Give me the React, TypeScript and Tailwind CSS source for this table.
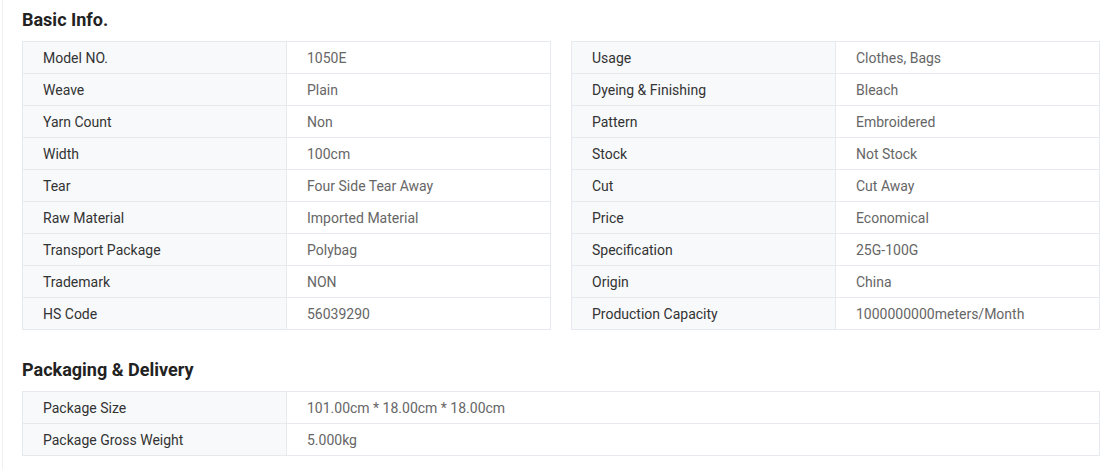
const basicLeft: [string, string][] = [
  ['Model NO.', '1050E'],
  ['Weave', 'Plain'],
  ['Yarn Count', 'Non'],
  ['Width', '100cm'],
  ['Tear', 'Four Side Tear Away'],
  ['Raw Material', 'Imported Material'],
  ['Transport Package', 'Polybag'],
  ['Trademark', 'NON'],
  ['HS Code', '56039290'],
];

const basicRight: [string, string][] = [
  ['Usage', 'Clothes, Bags'],
  ['Dyeing & Finishing', 'Bleach'],
  ['Pattern', 'Embroidered'],
  ['Stock', 'Not Stock'],
  ['Cut', 'Cut Away'],
  ['Price', 'Economical'],
  ['Specification', '25G-100G'],
  ['Origin', 'China'],
  ['Production Capacity', '1000000000meters/Month'],
];

const packaging: [string, string][] = [
  ['Package Size', '101.00cm * 18.00cm * 18.00cm'],
  ['Package Gross Weight', '5.000kg'],
];

function SpecTable({ rows }: { rows: [string, string][] }) {
  return (
    <div className="border-t border-l border-[#e6e9ed]">
      {rows.map(([k, v]) => (
        <div key={k} className="flex h-[32px] border-b border-[#e6e9ed]">
          <div className="w-[264px] shrink-0 flex items-center pl-[20px] pt-[2px] bg-[#f8f9fb] border-r border-[#e6e9ed] text-[#333] whitespace-nowrap">
            {k}
          </div>
          <div className="flex-1 flex items-center pl-[20px] pt-[2px] border-r border-[#e6e9ed] text-[#666] whitespace-nowrap">
            {v}
          </div>
        </div>
      ))}
    </div>
  );
}

export default function App() {
  return (
    <div className="bg-white w-[1106px] h-[469px] overflow-hidden" style={{ fontFamily: 'Roboto, "Liberation Sans", sans-serif' }}>
      <div className="ml-[2px] border-l border-[#f0f0f0] pl-[19px] h-full text-[14px]">
        <div className="w-[1078px]">
          <h2 className="h-[41px] pb-[3px] flex items-center text-[18px] font-bold text-[#222]">Basic Info.</h2>
          <div className="grid grid-cols-2 gap-[20px]">
            <SpecTable rows={basicLeft} />
            <SpecTable rows={basicRight} />
          </div>
          <h2 className="mt-[20px] h-[41px] pb-[3px] flex items-center text-[18px] font-bold text-[#222]">Packaging &amp; Delivery</h2>
          <SpecTable rows={packaging} />
        </div>
      </div>
    </div>
  );
}
